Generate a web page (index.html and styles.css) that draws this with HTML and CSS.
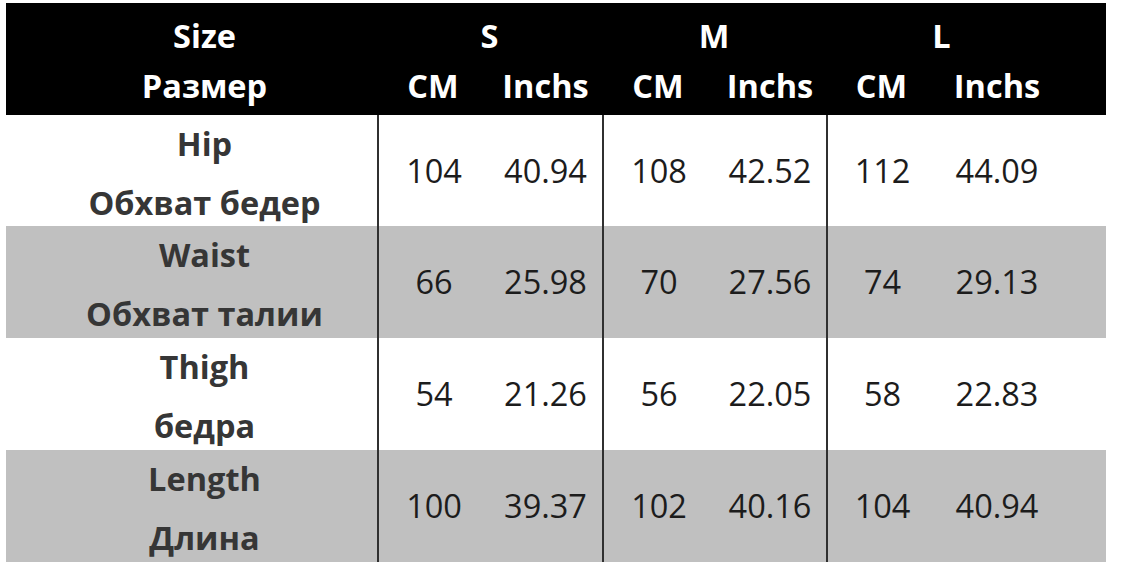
FILE: index.html
```html
<!DOCTYPE html>
<html lang="ru">
<head>
<meta charset="utf-8">
<title>Size chart</title>
<link rel="stylesheet" href="styles.css">
</head>
<body>
<div class="chart">
  <div class="head">
    <div class="hrow">
      <div class="label">Size</div>
      <div class="span2">S</div>
      <div class="span2">M</div>
      <div class="span2 lastspan">L</div>
    </div>
    <div class="hrow">
      <div class="label">Размер</div>
      <div>CM</div><div>Inchs</div>
      <div>CM</div><div>Inchs</div>
      <div>CM</div><div class="last">Inchs</div>
    </div>
  </div>
  <div class="row r1">
    <div class="label"><span>Hip</span><span>Обхват бедер</span></div>
    <div class="num sep">104</div><div class="num">40.94</div>
    <div class="num sep">108</div><div class="num">42.52</div>
    <div class="num sep">112</div><div class="num last">44.09</div>
  </div>
  <div class="row gray">
    <div class="label"><span>Waist</span><span>Обхват талии</span></div>
    <div class="num sep">66</div><div class="num">25.98</div>
    <div class="num sep">70</div><div class="num">27.56</div>
    <div class="num sep">74</div><div class="num last">29.13</div>
  </div>
  <div class="row">
    <div class="label"><span>Thigh</span><span>бедра</span></div>
    <div class="num sep">54</div><div class="num">21.26</div>
    <div class="num sep">56</div><div class="num">22.05</div>
    <div class="num sep">58</div><div class="num last">22.83</div>
  </div>
  <div class="row gray">
    <div class="label"><span>Length</span><span>Длина</span></div>
    <div class="num sep">100</div><div class="num">39.37</div>
    <div class="num sep">102</div><div class="num">40.16</div>
    <div class="num sep">104</div><div class="num last">40.94</div>
  </div>
</div>
</body>
</html>
```

FILE: styles.css
```css
html, body {
  margin: 0;
  padding: 0;
  background: #ffffff;
}

body {
  font-family: "Open Sans", "Noto Sans", sans-serif;
  overflow: hidden;
}

.chart {
  width: 1100px;
  margin: 3px 0 0 6px;
  display: flex;
  flex-direction: column;
}

.head {
  background: #000000;
  color: #ffffff;
  font-weight: 700;
  font-size: 32.5px;
  height: 112px;
  box-sizing: border-box;
  padding-top: 8px;
}

.hrow {
  display: grid;
  grid-template-columns: 371px 112px 113px 112px 112px 111px 169px;
  height: 50px;
  line-height: 50px;
  text-align: center;
}

.hrow .label,
.row .label {
  padding-left: 26px;
}

.span2 {
  grid-column: span 2;
}

.lastspan {
  padding-right: 49px;
}

.last {
  padding-right: 49px;
}

.row {
  display: grid;
  grid-template-columns: 371px 112px 113px 112px 112px 111px 169px;
  height: 112px;
  background: #ffffff;
}

.row.r1 {
  height: 111px;
}

.row.gray {
  background: #c0c0c0;
}

.row .label {
  display: flex;
  flex-direction: column;
  justify-content: center;
  align-items: center;
  font-weight: 700;
  font-size: 32.5px;
  line-height: 58.5px;
  padding-bottom: 2px;
  color: #363636;
  white-space: nowrap;
}

.num {
  display: flex;
  align-items: center;
  justify-content: center;
  font-size: 32.5px;
  color: #1c1c1c;
  padding-bottom: 9px;
}

.sep {
  border-left: 2px solid #303030;
}
```
